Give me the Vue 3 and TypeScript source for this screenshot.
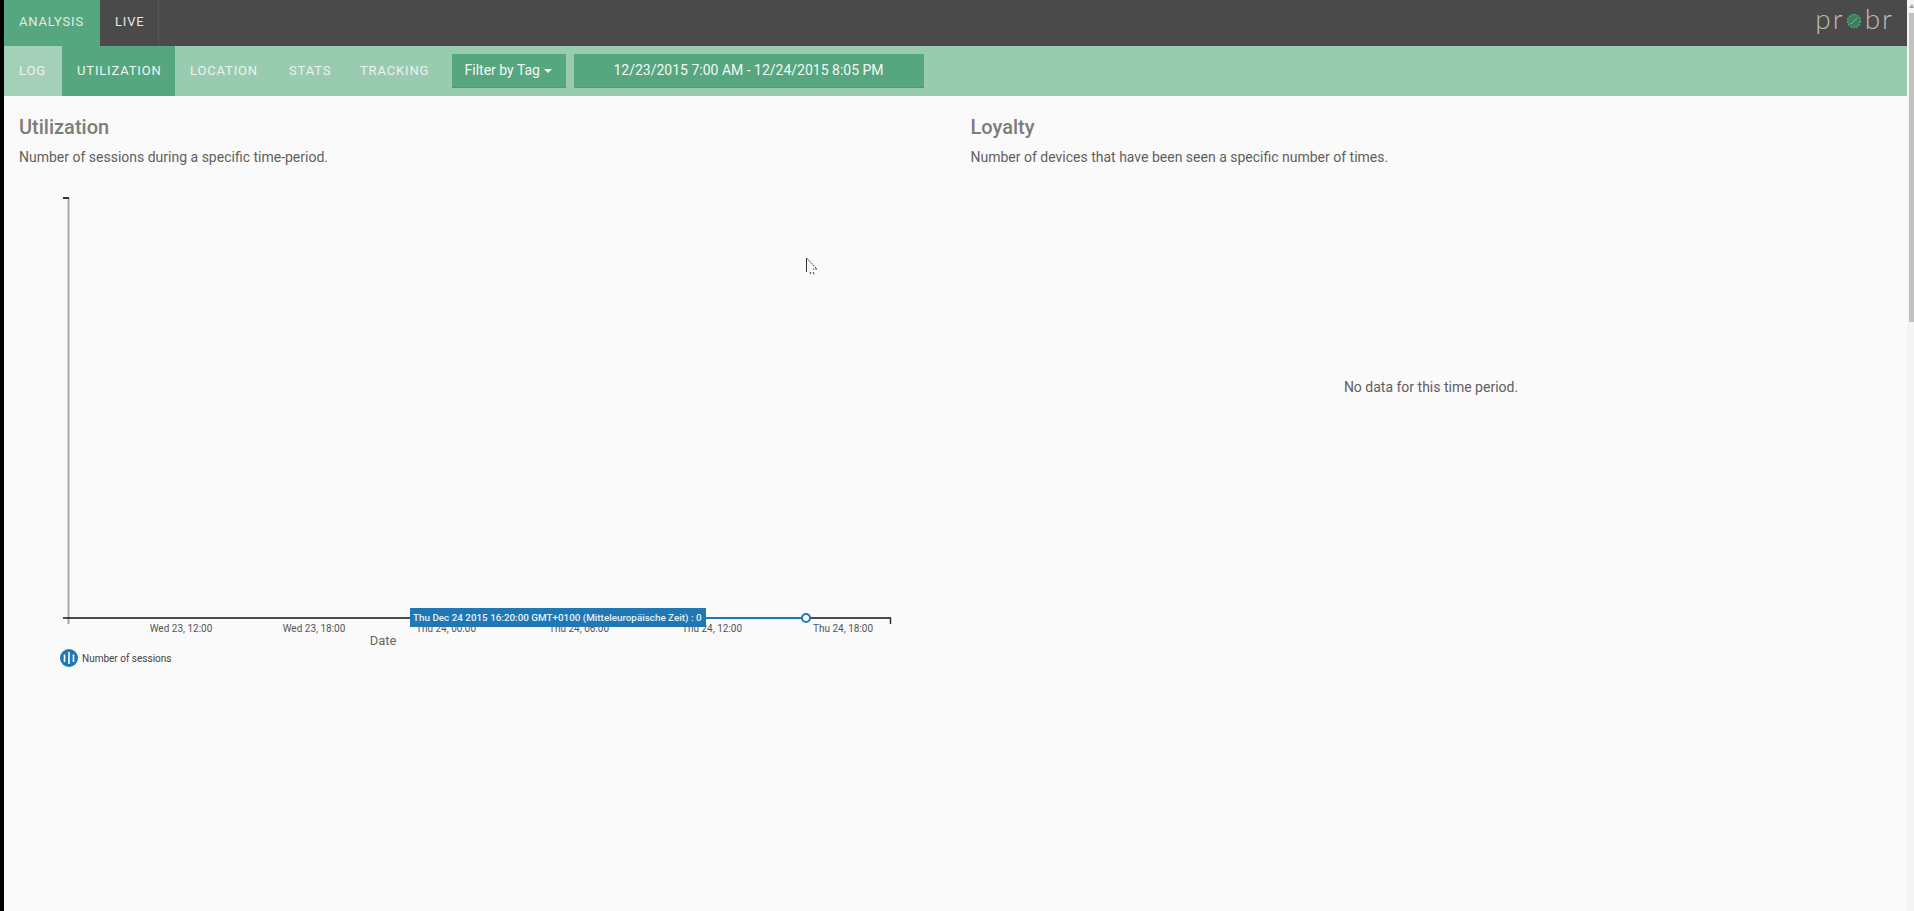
<script setup lang="ts">
const mainTabs = [
  { label: 'ANALYSIS', active: true },
  { label: 'LIVE', active: false },
]
const subTabs = [
  { label: 'LOG', cls: 'log', w: 58 },
  { label: 'UTILIZATION', cls: 'active', w: 113 },
  { label: 'LOCATION', cls: '', w: 99 },
  { label: 'STATS', cls: '', w: 71 },
  { label: 'TRACKING', cls: '', w: 98 },
]
const ticks = [
  { x: 181, label: 'Wed 23, 12:00' },
  { x: 314, label: 'Wed 23, 18:00' },
  { x: 446, label: 'Thu 24, 00:00' },
  { x: 579, label: 'Thu 24, 06:00' },
  { x: 712, label: 'Thu 24, 12:00' },
  { x: 843, label: 'Thu 24, 18:00' },
]
</script>

<template>
  <div class="page">
    <div class="edge"></div>
    <div class="main">
      <header class="topbar">
        <nav class="tabs">
          <a v-for="t in mainTabs" :key="t.label" class="tab" :class="{ on: t.active }">{{ t.label }}</a>
        </nav>
        <div class="logo">
          <span>pr</span>
          <svg class="logo-o" width="16" height="16" viewBox="0 0 16 16">
            <circle cx="8" cy="8" r="6.5" fill="#3f7f5c" stroke="#4fa274" stroke-width="1.5" stroke-dasharray="2 1" />
            <path d="M5 11 L11 5" stroke="#a5cfb6" stroke-width="1" stroke-dasharray="2 1" />
          </svg>
          <span>br</span>
        </div>
      </header>
      <div class="subbar">
        <a
          v-for="s in subTabs"
          :key="s.label"
          class="sub"
          :class="s.cls"
          :style="{ width: s.w + 'px' }"
        >{{ s.label }}</a>
        <button class="btn filter">Filter by Tag <i class="caret"></i></button>
        <button class="btn range">12/23/2015 7:00 AM - 12/24/2015 8:05 PM</button>
      </div>
      <div class="content">
        <section class="col">
          <div class="head">
            <h2>Utilization</h2>
            <p>Number of sessions during a specific time-period.</p>
          </div>
          <div class="chart">
            <svg class="plot" width="951" height="500" viewBox="4 186 951 500">
              <line x1="68.5" y1="198" x2="68.5" y2="624" stroke="#a8a8a8" stroke-width="2" />
              <line x1="63" y1="198" x2="69" y2="198" stroke="#333" stroke-width="2" />
              <line x1="63" y1="618" x2="891" y2="618" stroke="#111" stroke-width="1.5" />
              <line x1="890.5" y1="618" x2="890.5" y2="624" stroke="#333" stroke-width="1.5" />
              <line x1="700" y1="618" x2="806" y2="618" stroke="#1f77b4" stroke-width="2" />
              <circle cx="806" cy="618" r="4" fill="#fff" stroke="#1f77b4" stroke-width="2" />
              <text v-for="t in ticks" :key="t.x" :x="t.x" y="632" text-anchor="middle" class="tick">{{ t.label }}</text>
              <text x="383" y="645" text-anchor="middle" class="axis">Date</text>
              <circle cx="69" cy="658" r="9" fill="#1f77b4" />
              <line x1="64.5" y1="654.5" x2="64.5" y2="662" stroke="#fff" stroke-width="1.6" />
              <line x1="69" y1="652" x2="69" y2="664" stroke="#fff" stroke-width="1.6" />
              <line x1="73.5" y1="654.5" x2="73.5" y2="662" stroke="#fff" stroke-width="1.6" />
              <text x="82" y="662" class="legend">Number of sessions</text>
            </svg>
            <div class="tip">Thu Dec 24 2015 16:20:00 GMT+0100 (Mitteleuropäische Zeit) : 0</div>
            <svg class="cursor" width="14" height="20" viewBox="0 0 14 20">
              <path d="M1.5 1 V15 M1.5 1 L12 12 H8 M5 15 L6 18 M8 15 L9.5 18" fill="none" stroke="#333" stroke-width="1" stroke-dasharray="2 1" />
              <path d="M1.5 1 V15" fill="none" stroke="#333" stroke-width="1" />
            </svg>
          </div>
        </section>
        <section class="col">
          <div class="head">
            <h2>Loyalty</h2>
            <p>Number of devices that have been seen a specific number of times.</p>
          </div>
          <div class="nodata">No data for this time period.</div>
        </section>
      </div>
    </div>
    <div class="scroll">
      <i class="arrow"></i>
      <div class="thumb"></div>
    </div>
  </div>
</template>

<style>
html, body { margin: 0; overflow: hidden; background: #fafafa; }
</style>

<style scoped>
.page {
  display: flex;
  height: 911px;
  overflow: hidden;
  font-family: Roboto, "Liberation Sans", sans-serif;
  background: #fafafa;
}
.edge { width: 4px; background: #000; flex: none; }
.main { flex: 1; min-width: 0; display: flex; flex-direction: column; }

.topbar {
  height: 46px;
  background: #4a4a4a;
  display: flex;
  justify-content: space-between;
  flex: none;
}
.tabs { display: flex; }
.tab {
  display: flex;
  align-items: center;
  box-sizing: border-box;
  padding: 0 0 4px 15px;
  font-size: 13px;
  letter-spacing: 0.8px;
  color: #e8e8e8;
}
.tab.on { background: #56a67f; width: 96px; }
.tab:not(.on) { border-right: 1px solid #575757; width: 59px; }

.logo {
  display: flex;
  align-items: center;
  padding: 0 13px 0 0;
  font-family: Lato, sans-serif;
  font-weight: 300;
  font-size: 28px;
  letter-spacing: 2px;
  color: #bcbcbc;
  line-height: 36px;
  height: 36px;
}
.logo-o { margin: 6px 3px 0 1px; }

.subbar {
  height: 50px;
  flex: none;
  background: #99cbb1;
  display: flex;
  align-items: center;
}
.sub {
  align-self: stretch;
  display: flex;
  align-items: center;
  box-sizing: border-box;
  padding: 0 0 1px 15px;
  font-size: 13px;
  letter-spacing: 0.85px;
  color: #e9f4ee;
}
.sub.active { background: #56a67f; color: #eef7f2; }
.sub.log { background: #a4d0b9; }
.btn {
  height: 34px;
  border: none;
  border-bottom: 1px solid #4f9a75;
  background: #56a67f;
  color: #f2f8f5;
  font-family: inherit;
  font-size: 14px;
  padding: 0 1px 1px 0;
}
.filter { width: 114px; margin-left: 9px; }
.range { width: 350px; margin-left: 8px; }
.caret {
  display: inline-block;
  width: 0;
  height: 0;
  margin-left: 1px;
  vertical-align: middle;
  border-top: 4px solid #f2f8f5;
  border-left: 4px solid transparent;
  border-right: 4px solid transparent;
}

.content { display: grid; grid-template-columns: 951.5px 951.5px; flex: 1; }
.col { position: relative; }
.head { padding: 20px 15px 0; height: 70px; }
.head h2 {
  margin: 0;
  font-size: 20px;
  line-height: 22px;
  font-weight: 500;
  color: #7c7c7c;
}
.head p {
  margin: 9px 0 0;
  font-size: 14px;
  line-height: 20px;
  color: #5f5f5f;
}

.chart { position: relative; height: 500px; }
.plot { display: block; }
.tick { font-size: 10px; fill: #555; font-family: Roboto, sans-serif; }
.axis { font-size: 13px; fill: #666; font-family: Roboto, sans-serif; }
.legend { font-size: 10px; fill: #444; font-family: Roboto, sans-serif; }
.tip {
  position: absolute;
  left: 406px;
  top: 422px;
  width: 296px;
  height: 19px;
  box-sizing: border-box;
  padding-left: 3px;
  background: #1f77b4;
  color: #e6f1f8;
  font-size: 9.85px;
  font-weight: 500;
  line-height: 19px;
  white-space: nowrap;
}
.cursor { position: absolute; left: 801px; top: 71px; }

.nodata {
  margin-top: 191px;
  text-align: center;
  font-size: 14px;
  line-height: 20px;
  color: #5f5f5f;
  width: 951px;
}

.scroll {
  width: 7px;
  flex: none;
  background: #f4f4f4;
  position: relative;
}
.thumb {
  position: absolute;
  left: 2px;
  right: 0;
  top: 13px;
  height: 309px;
  background: #c1c1c1;
}
.arrow {
  position: absolute;
  left: 2px;
  top: 4px;
  width: 0;
  height: 0;
  border-left: 3px solid transparent;
  border-right: 2px solid transparent;
  border-bottom: 4px solid #a0a0a0;
}
</style>
